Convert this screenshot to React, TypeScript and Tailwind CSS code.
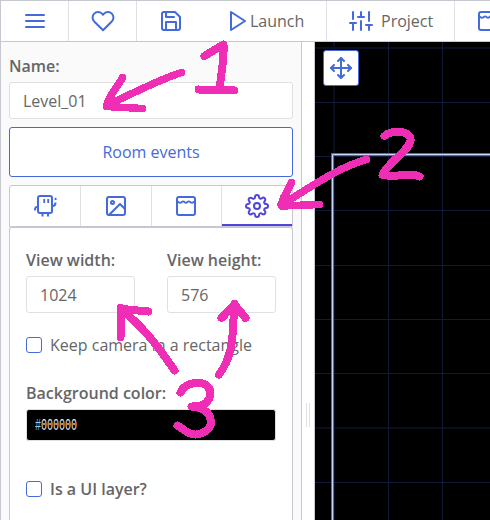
import React from "react";
import { FiMenu, FiHeart, FiSave, FiPlay, FiSliders, FiImage, FiSettings, FiMove } from "react-icons/fi";

const line = {
  width: 24,
  height: 24,
  viewBox: "0 0 24 24",
  fill: "none",
  stroke: "currentColor",
  strokeWidth: 2,
  strokeLinecap: "round" as const,
  strokeLinejoin: "round" as const,
};

function RoomIcon() {
  return (
    <svg {...line} className="shrink-0">
      <rect x="3" y="3" width="18" height="18" rx="2" />
      <path d="M3 7.400c1.500 0 1.500 1.400 3 1.400s2-1.400 3.300-1.400 1.400 1.400 2.700 1.400 1.400-1.400 2.700-1.400 1.800 1.400 3.300 1.400 1.500-1.400 3-1.400" strokeWidth="1.900" />
    </svg>
  );
}

function CopyIcon() {
  return (
    <svg {...line} className="shrink-0">
      <rect x="5" y="2" width="14" height="17" rx="2" />
      <path d="M9.500 20v2.500M15 20v2.500M4 13c-1.300 0-2 .8-2 3.500M19.500 12c2 0 3-.8 3-3.500" strokeLinecap="butt" />
      <path d="M11.200 5v4M15.200 5v4M22.600 3.800v2.200" strokeWidth="1.800" strokeLinecap="butt" />
    </svg>
  );
}

function Field({ label, value, className = "" }: { label: string; value: string; className?: string }) {
  return (
    <div className={className}>
      <div className="h-[27px] font-semibold leading-[22px]">{label}</div>
      <div className="flex h-[37px] items-center rounded-[3px] border border-[#dfe0e2] bg-white pl-[13px]">{value}</div>
    </div>
  );
}

function Check({ children }: { children: React.ReactNode }) {
  return (
    <div className="flex h-6 items-center gap-2 whitespace-nowrap">
      <span className="size-4 shrink-0 rounded-[3px] border border-[#446adb] bg-white" />
      {children}
    </div>
  );
}

function Canvas() {
  return (
    <div className="relative min-w-0 flex-1 overflow-hidden bg-black">
      <svg width="175" height="478" viewBox="315 42 175 478" className="block">
        <g fill="#111a38">
          <path fill="#080e20" d="M333 42h2v478h-2zM315 47h175v2H315zM315 427h175v2H315z" />
          <path d="M388 42h1v478h-1zM442 42h1v478h-1zM315 102h175v1H315zM315 156h175v1H315zM315 210h175v1H315zM315 265h175v1H315zM315 319h175v1H315zM315 373h175v1H315zM315 482h175v1H315z" />
        </g>
        <path d="M490 154.500H332.500V520" fill="none" stroke="#446adb" strokeWidth="3" />
        <path d="M490 154.500H332.500V520" fill="none" stroke="#c9d6fb" strokeWidth="1" />
      </svg>
      <div className="absolute left-2 top-2 flex size-9 items-center justify-center rounded-[3px] border border-[#446adb] bg-white text-[#446adb]">
        <FiMove size={24} />
      </div>
    </div>
  );
}

function Annotations() {
  return (
    <svg width="490" height="520" className="pointer-events-none absolute inset-0" fill="none" stroke="#ef2eb5" strokeWidth="8" strokeLinecap="round" strokeLinejoin="round" shapeRendering="crispEdges">
      <path strokeWidth="7.500" d="M181.500 72.500C158 80 132 94 107 105M122.500 77.500C118 87 108 96 106.500 106.500L142.500 108.500" />
      <path d="M204.500 56L223.500 44.500C224.500 58 221 74 219.500 90M198.500 89.500L234.500 90.500" />
      <path strokeWidth="7.500" d="M366.500 159.500C336 168 310 188 281 205M291.500 182.500C288 192 281 198 281.500 206L319.500 204.500" />
      <path d="M384.500 136C392 129.500 407 130.500 410.500 138C413 149 387 162 382.500 175C396 177.500 413 172.500 419.500 176.500" />
      <path d="M174.500 370.500C158 346 144 328 121 309M120.500 337V308C130 311 140 310 148.500 311.500" />
      <path d="M219 374.500C236 352 232 327 234.500 304M221.500 318L234.500 304.500L245.500 318" />
      <path d="M180.500 392.500C185 382 201 380.500 207 386C213 391 210 399 206 403C202 406 196 406.500 191.500 406.500C200 407 207 410 210 417C214 430 203 433.500 196 434.500C187 435 183 428 177.500 425.500" />
    </svg>
  );
}

export default function App() {
  return (
    <div className="relative flex h-[520px] w-[490px] flex-col overflow-hidden border-l border-t border-[#c5c9cf] bg-white font-['Open_Sans','Noto_Sans',sans-serif] text-[16px] text-[#666]">
      <header className="flex h-[41px] shrink-0 border-b border-[#c5c9cf] text-[#446adb]">
        <div className="flex w-[68px] shrink-0 items-center justify-center border-r border-[#dfe0e2]"><FiMenu size={24} /></div>
        <div className="flex w-[68px] shrink-0 items-center justify-center border-r border-[#dfe0e2]"><FiHeart size={24} /></div>
        <div className="flex w-[68px] shrink-0 items-center justify-center"><FiSave size={24} /></div>
        <div className="flex w-[122px] shrink-0 items-center border-r border-[#dfe0e2] pl-[21px]">
          <FiPlay size={24} className="shrink-0" /><span className="text-[#666]">Launch</span>
        </div>
        <div className="flex w-[128px] shrink-0 items-center gap-2 border-r border-[#dfe0e2] pl-[22px]">
          <FiSliders size={24} className="shrink-0" /><span className="text-[#666]">Project</span>
        </div>
        <div className="flex shrink-0 items-center pl-[21px]"><RoomIcon /></div>
      </header>
      <main className="flex min-h-0 flex-1">
        <aside className="flex w-[301px] shrink-0 flex-col border-r border-[#c5c9cf] bg-[#fafafa] pl-2 pr-2 pt-[13px]">
          <Field label="Name:" value="Level_01" />
          <button className="mt-2 h-[50px] shrink-0 rounded-[3px] border border-[#446adb] bg-white text-[#446adb]">Room events</button>
          <nav className="mt-2 flex h-[42px] shrink-0 rounded-t-[3px] border border-[#c5c9cf] bg-white text-[#446adb]">
            <div className="flex w-[71px] items-center border-r border-[#dfe0e2] pl-[23px]"><CopyIcon /></div>
            <div className="flex w-[71px] items-center justify-center border-r border-[#dfe0e2]"><FiImage size={24} /></div>
            <div className="flex w-[70px] items-center border-r border-[#dfe0e2] pl-[22px]"><RoomIcon /></div>
            <div className="flex flex-1 items-center justify-center border-b-2 border-[#5144db] text-[#5144db]"><FiSettings size={24} className="relative top-px" /></div>
          </nav>
          <section className="min-h-0 flex-1 rounded-t-[3px] border border-b-0 border-[#c5c9cf] bg-white px-4 pt-[21px]">
            <div className="flex gap-8">
              <Field label="View width:" value="1024" className="w-[109px]" />
              <Field label="View height:" value="576" className="w-[109px]" />
            </div>
            <div className="mt-5"><Check>Keep camera in a rectangle</Check></div>
            <div className="mt-[25px] h-[27px] font-semibold leading-[22px]">Background color:</div>
            <div className="flex h-[32px] items-center rounded-[3px] border border-[#dfe0e2] bg-black pl-2">
              <span className="relative top-px w-[42px] origin-left scale-x-[0.625] font-['Liberation_Mono',monospace] text-[16px] leading-4 text-[#e4e4e4]">
                <span className="text-[#8fd0f5]">#</span>000000
              </span>
            </div>
            <div className="mt-[36px] font-semibold"><Check>Is a UI layer?</Check></div>
          </section>
        </aside>
        <div className="flex w-[13px] shrink-0 items-center justify-center border-r border-[#c5c9cf]">
          <div className="relative top-[134px] h-6 w-1 border-x border-[#dfe0e2]" />
        </div>
        <Canvas />
      </main>
      <div className="absolute -left-px -top-px h-[520px] w-[490px]"><Annotations /></div>
    </div>
  );
}
